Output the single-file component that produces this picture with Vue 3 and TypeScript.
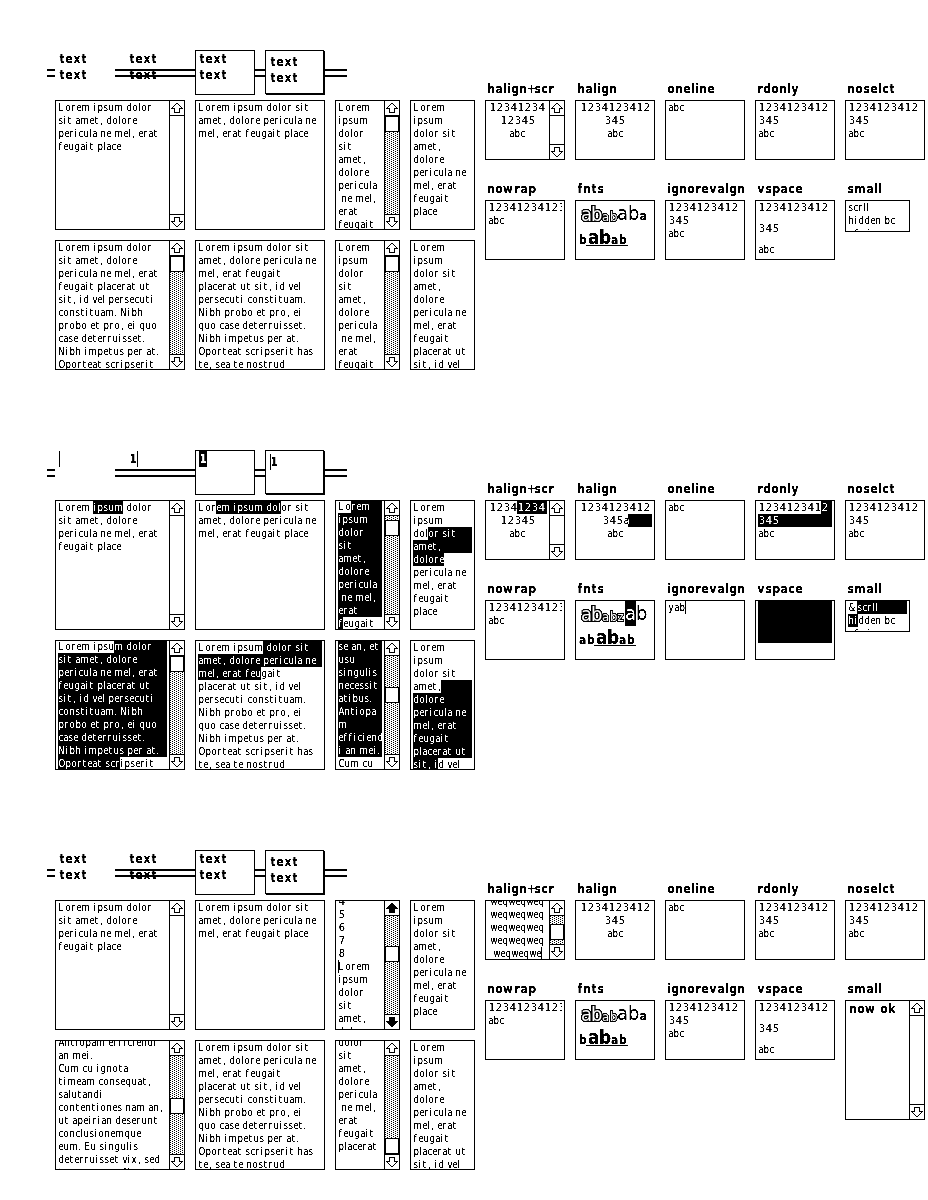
<script setup lang="ts">
import { defineComponent, h, type PropType } from 'vue'

type Face = 'plain' | 'bold'
interface Line { t: string; sel?: [number, number]; caret?: number }
interface Box {
  w: number; h: number; lines: Line[]; thumb?: number; bar?: boolean; solid?: boolean
  center?: boolean; shift?: number; pitch?: number; face?: Face; label?: string; fonts?: Run[]; block?: [number, number, number, number]
}
interface Run { t: string; x: number; y: number; size: number; bold?: boolean; outline?: boolean; shade?: boolean; adv: number; line?: [number, number] }
interface Field { kind: string; lines: Line[] }

const plainAdv: Record<string, number> = {
  a: 5, b: 6, c: 5, d: 6, e: 5, f: 5, g: 6, h: 6, i: 4, l: 3, m: 9, n: 6, o: 6, p: 6, q: 6, r: 5, s: 5, t: 5,
  u: 6, v: 5, w: 7, x: 6, y: 6, z: 6, L: 7, N: 7, O: 7, C: 6, E: 6, A: 6, ',': 4, '.': 3, ' ': 3, '&': 9,
}
const boldAdv: Record<string, number> = {
  a: 8, b: 8, c: 7, d: 8, e: 8, f: 6, g: 8, h: 8, i: 4, k: 8, l: 4, m: 12, n: 8, o: 8, p: 8, r: 6, s: 7, t: 6,
  u: 8, v: 8, w: 11, x: 8, y: 8, ' ': 4, '+': 7, '1': 8,
}
const stops = (t: string, face: Face): number[] => {
  const table = face === 'bold' ? boldAdv : plainAdv
  const out = [0]
  for (const c of t) out.push(out[out.length - 1] + (table[c] ?? 7))
  return out
}
// side bearing of each glyph inside its cell
const bearing = (c: string, face: Face): number => {
  if (face === 'bold') return c === 'w' || c === '+' ? 0 : 0.6
  if (/[0-9]/.test(c)) return 0.8
  return c === ',' ? 1.4 : c === 'L' || c === 'N' ? 0.3 : 0.6
}

const TextLine = defineComponent({
  props: {
    line: { type: Object as PropType<Line>, required: true },
    face: { type: String as PropType<Face>, default: 'plain' },
    width: { type: Number, required: true },
    pitch: { type: Number, default: 13 },
    center: Boolean,
  },
  setup(p) {
    return () => {
      const s = stops(p.line.t, p.face)
      const total = s[s.length - 1]
      const x0 = p.center ? Math.floor((p.width - total) / 2) : 0
      const k = p.face === 'bold' ? 0.94 : /^[0-9]/.test(p.line.t) ? 1 : 0.87
      const kids = []
      if (p.line.t) {
        kids.push(h('text', {
          class: 'glyphs ' + p.face,
          x: [...p.line.t].map((c, i) => ((s[i] + x0 + bearing(c, p.face)) / k).toFixed(2)).join(' '),
          y: p.face === 'bold' ? 12 : 10,
          transform: `scale(${k} 1)`,
          filter: 'url(#bitmap)',
        }, p.line.t))
      }
      if (p.line.sel) {
        const [a, b] = p.line.sel
        const left = a === 0 && !p.center ? 0 : x0 + s[a]
        const right = b < 0 ? p.width : x0 + s[b]
        kids.push(h('rect', { class: 'invert', x: left, y: 0, width: right - left, height: p.pitch }))
      }
      if (p.line.caret !== undefined) {
        kids.push(h('rect', { x: x0 + s[p.line.caret], y: 0, width: 1, height: p.pitch }))
      }
      return h('svg', { class: 'line', width: p.width, height: p.pitch, 'shape-rendering': 'crispEdges' }, kids)
    }
  },
})

const L = (...t: string[]): Line[] => t.map((x) => ({ t: x }))
const mark = (lines: Line[], marks: Record<number, [number, number]>): Line[] =>
  lines.map((l, i) => (marks[i] ? { ...l, sel: marks[i] } : l))

const shortA = L('Lorem ipsum dolor', 'sit amet, dolore', 'pericula ne mel, erat', 'feugait place')
const shortB = L('Lorem ipsum dolor sit', 'amet, dolore pericula ne', 'mel, erat feugait place')
const thinA = L('Lorem', 'ipsum', 'dolor', 'sit', 'amet,', 'dolore', 'pericula', ' ne mel,', 'erat', 'feugait')
const thinB = L('Lorem', 'ipsum', 'dolor sit', 'amet,', 'dolore', 'pericula ne', 'mel, erat', 'feugait', 'place')
const thinC = L('Lorem', 'ipsum', 'dolor sit', 'amet,', 'dolore', 'pericula ne', 'mel, erat', 'feugait', 'placerat ut', 'sit, id vel')
const longA = L('Lorem ipsum dolor', 'sit amet, dolore', 'pericula ne mel, erat', 'feugait placerat ut', 'sit, id vel persecuti',
  'constituam. Nibh', 'probo et pro, ei quo', 'case deterruisset.', 'Nibh impetus per at.', 'Oporteat scripserit')
const longB = L('Lorem ipsum dolor sit', 'amet, dolore pericula ne', 'mel, erat feugait', 'placerat ut sit, id vel', 'persecuti constituam.',
  'Nibh probo et pro, ei', 'quo case deterruisset.', 'Nibh impetus per at.', 'Oporteat scripserit has', 'te, sea te nostrud')
const digits = L('1234123412', '345', 'abc')

const A: [number, number] = [0, -1]
const wide = { w: 130, h: 130 }
const thin = { w: 65, h: 130 }
const cell = { w: 80, h: 60 }

const fontsBase: Run[] = [
  { t: 'ab', x: 3, y: 20, size: 20, outline: true, shade: true, adv: 10 },
  { t: 'ab', x: 24, y: 20, size: 13, outline: true, adv: 8 },
]
const fontsOne: Run[] = [
  ...fontsBase,
  { t: 'ab', x: 39, y: 19, size: 20, adv: 11 },
  { t: 'a', x: 61.5, y: 19, size: 12, bold: true, adv: 8 },
  { t: 'b', x: 1, y: 43, size: 12, bold: true, adv: 8 },
  { t: 'ab', x: 10, y: 43, size: 19, bold: true, adv: 11, line: [8, 50] },
  { t: 'ab', x: 33, y: 43, size: 12, bold: true, adv: 8 },
]
const fontsTwo: Run[] = [
  ...fontsBase,
  { t: 'z', x: 39.5, y: 20, size: 13, outline: true, adv: 8 },
  { t: 'ab', x: 47, y: 19, size: 20, adv: 11 },
  { t: 'ab', x: 1, y: 43, size: 12, bold: true, adv: 8 },
  { t: 'ab', x: 18, y: 43, size: 19, bold: true, adv: 11, line: [16, 58] },
  { t: 'ab', x: 41, y: 43, size: 12, bold: true, adv: 8 },
]

const grid = (over: Record<string, Partial<Box>>): Box[] => {
  const base: Box[] = [
    { ...cell, label: 'halign+scr', bar: true, center: true, lines: L('12341234', '12345', 'abc') },
    { ...cell, label: 'halign', center: true, lines: digits },
    { ...cell, label: 'oneline', lines: L('abc') },
    { ...cell, label: 'rdonly', lines: digits },
    { ...cell, label: 'noselct', lines: digits },
    { ...cell, label: 'nowrap', lines: L('12341234123', 'abc') },
    { ...cell, label: 'fnts', lines: [], fonts: fontsOne },
    { ...cell, label: 'ignorevalgn', lines: digits },
    { ...cell, label: 'vspace', lines: digits, pitch: 21 },
    { w: 65, h: 32, label: 'small', lines: L('scrll', 'hidden bc', 'of size') },
  ]
  return base.map((b) => ({ ...b, ...(over[b.label!] ?? {}) }))
}

const kinds = ['opaque', 'clear', 'opaque framed', 'opaque framed shadow']
const textFields: Field[] = kinds.map((kind) => ({ kind, lines: L('text', 'text') }))

const sections: { fields: Field[]; areas: Box[]; cells: Box[] }[] = [
  {
    fields: textFields,
    areas: [
      { ...wide, bar: true, lines: shortA },
      { ...wide, lines: shortB },
      { ...thin, bar: true, thumb: 0, lines: thinA },
      { ...thin, lines: thinB },
      { ...wide, bar: true, thumb: 0, lines: longA },
      { ...wide, lines: longB },
      { ...thin, bar: true, thumb: 0, lines: thinA },
      { ...thin, lines: thinC },
    ],
    cells: grid({}),
  },
  {
    fields: [
      { kind: kinds[0], lines: [{ t: '', caret: 0 }] },
      { kind: kinds[1], lines: [{ t: '1', caret: 1 }] },
      { kind: kinds[2], lines: [{ t: '1', sel: [0, 1] }] },
      { kind: kinds[3], lines: [{ t: '1', caret: 0 }] },
    ],
    areas: [
      { ...wide, bar: true, lines: mark(shortA, { 0: [6, 11] }) },
      { ...wide, lines: mark(shortB, { 0: [3, 15] }) },
      { ...thin, bar: true, thumb: 4, shift: -1, lines: mark(thinA, { 0: [2, -1], 1: A, 2: A, 3: A, 4: A, 5: A, 6: A, 7: A, 8: A, 9: [0, 1] }) },
      { ...thin, lines: mark(thinB, { 2: [3, -1], 3: A, 4: [0, 6] }) },
      { ...wide, bar: true, thumb: 0, shift: -1, lines: mark(longA, { 0: [10, -1], 1: A, 2: A, 3: A, 4: A, 5: A, 6: A, 7: A, 8: A, 9: [0, 12] }) },
      { ...wide, lines: mark(longB, { 0: [11, -1], 1: A, 2: [0, 13] }) },
      {
        ...thin, bar: true, thumb: 31, shift: -1,
        lines: mark(L('se an, et', 'usu', 'singulis', 'necessit', 'atibus.', 'Antiopa', 'm', 'efficiend', 'i an mei.', 'Cum cu'),
          { 0: A, 1: A, 2: A, 3: A, 4: A, 5: A, 6: A, 7: A, 8: A }),
      },
      { ...thin, lines: mark(thinC, { 3: [5, -1], 4: A, 5: A, 6: A, 7: A, 8: A, 9: [0, 6] }) },
    ],
    cells: grid({
      'halign+scr': { lines: mark(L('12341234', '12345', 'abc'), { 0: [4, -1] }) },
      halign: { lines: mark(L('1234123412', '345a', 'abc'), { 1: [4, -1] }) },
      rdonly: { lines: mark(digits, { 0: [9, -1], 1: A }) },
      fnts: { fonts: fontsTwo, block: [47, 0, 11, 25] },
      ignorevalgn: { lines: [{ t: 'yab', caret: 3 }] },
      vspace: { lines: mark(L('', ''), { 0: A, 1: A }) },
      small: { lines: mark(L('&scrll', 'hidden bc', 'of size'), { 0: [1, -1], 1: [0, 2] }) },
    }),
  },
  {
    fields: textFields,
    areas: [
      { ...wide, bar: true, lines: shortA },
      { ...wide, lines: shortB },
      {
        ...thin, bar: true, thumb: 30, solid: true, shift: -6,
        lines: [...L('4', '5', '6', '7', '8'), { t: 'Lorem', caret: 0 }, ...L('ipsum', 'dolor', 'sit', 'amet,', 'dolore')],
      },
      { ...thin, lines: thinB },
      {
        ...wide, bar: true, thumb: 42, shift: -5,
        lines: L('Antiopam efficiendi', 'an mei.', 'Cum cu ignota', 'timeam consequat,', 'salutandi', 'contentiones nam an,',
          'ut apeirian deserunt', 'conclusionemque', 'eum. Eu singulis', 'deterruisset vix, sed', 'te omnesque fierent'),
      },
      { ...wide, lines: longB },
      { ...thin, bar: true, thumb: 82, shift: -5, lines: L('dolor', 'sit', 'amet,', 'dolore', 'pericula', ' ne mel,', 'erat', 'feugait', 'placerat') },
      { ...thin, lines: thinC },
    ],
    cells: grid({
      'halign+scr': {
        thumb: 8, shift: -6,
        lines: [...L('weqweqweq', 'weqweqweq', 'weqweqweq', 'weqweqweq'), { t: 'weqweqwe', caret: 8 }],
      },
      small: { w: 80, h: 120, bar: true, face: 'bold', pitch: 16, lines: L('now ok') },
    }),
  },
]

const contentWidth = (b: Box) => (b.bar ? b.w - 21 : b.w - 6)
const runStops = (r: Run) => [...r.t].map((_, i) => r.x + i * r.adv).join(' ')

const outlineRows: [number, number, number][] = [
  [2, 6, 2], [3, 5, 1], [3, 8, 1], [4, 4, 1], [4, 9, 1], [5, 3, 1], [5, 10, 1], [6, 2, 1], [6, 11, 1],
  [7, 1, 4], [7, 9, 4], [8, 4, 1], [8, 9, 1], [9, 4, 1], [9, 9, 1], [10, 4, 1], [10, 9, 1], [11, 4, 6],
]
const solidRows: [number, number, number][] = [
  [2, 6, 2], [3, 5, 4], [4, 4, 6], [5, 3, 8], [6, 2, 10], [7, 1, 12], [8, 4, 6], [9, 4, 6], [10, 4, 6], [11, 4, 6],
]
const arrow = (solid?: boolean) =>
  (solid ? solidRows : outlineRows).map(([y, x, n]) => `M${x} ${y}h${n}v1h${-n}z`).join('')
</script>

<template>
  <main class="page">
    <svg class="defs" width="0" height="0" aria-hidden="true">
      <filter id="bitmap" x="-5%" y="-20%" width="110%" height="140%">
        <feComponentTransfer><feFuncA type="linear" slope="5" intercept="-1.6" /></feComponentTransfer>
      </filter>
    </svg>
    <section v-for="(s, si) in sections" :key="si" class="suite">
      <div class="left">
        <div class="fields">
          <div v-for="(f, i) in s.fields" :key="i" class="field" :class="f.kind">
            <TextLine v-for="(l, j) in f.lines" :key="j" :line="l" face="bold" :width="50" :pitch="16" />
          </div>
        </div>
        <div class="areas">
          <div v-for="(b, i) in s.areas" :key="i" class="box" :style="{ width: b.w + 'px', height: b.h + 'px' }">
            <div class="content" :style="{ width: contentWidth(b) + 'px' }">
              <div class="lines" :style="{ marginTop: (b.shift ?? 0) + 'px' }">
                <TextLine v-for="(l, j) in b.lines" :key="j" :line="l" :width="contentWidth(b)" />
              </div>
            </div>
            <div v-if="b.bar" class="bar">
              <svg class="arrow" width="14" height="14"><path :d="arrow(b.solid)" /></svg>
              <div class="track" :class="{ active: b.thumb !== undefined }">
                <div v-if="b.thumb !== undefined" class="thumb" :style="{ marginTop: b.thumb + 'px' }"></div>
              </div>
              <svg class="arrow down" width="14" height="14"><path :d="arrow(b.solid)" /></svg>
            </div>
          </div>
        </div>
      </div>
      <div class="cells">
        <div v-for="b in s.cells" :key="b.label" class="cell">
          <div class="label"><TextLine :line="{ t: b.label! }" face="bold" :width="82" :pitch="16" /></div>
          <div class="box" :style="{ width: b.w + 'px', height: b.h + 'px' }">
            <div class="content" :style="{ width: contentWidth(b) + 'px' }">
              <svg v-if="b.fonts" class="line" width="74" height="58" shape-rendering="crispEdges">
                <template v-for="(r, j) in b.fonts" :key="j">
                  <text
                    class="run" :class="{ strong: r.bold, outline: r.outline, shade: r.shade }"
                    :x="runStops(r)" :y="r.y" :font-size="r.size" filter="url(#bitmap)"
                  >{{ r.t }}</text>
                  <rect v-if="r.line" :x="r.line[0]" y="44" :width="r.line[1] - r.line[0]" height="1" />
                </template>
                <rect v-if="b.block" class="invert" :x="b.block[0]" :y="b.block[1]" :width="b.block[2]" :height="b.block[3]" />
              </svg>
              <div v-else class="lines" :class="{ strong: b.face === 'bold' }" :style="{ marginTop: (b.shift ?? 0) + 'px' }">
                <TextLine
                  v-for="(l, j) in b.lines" :key="j" :line="l" :face="b.face ?? 'plain'" :width="contentWidth(b)"
                  :pitch="b.pitch ?? 13" :center="b.center"
                />
              </div>
            </div>
            <div v-if="b.bar" class="bar">
              <svg class="arrow" width="14" height="14"><path :d="arrow()" /></svg>
              <div class="track" :class="{ active: b.thumb !== undefined }">
                <div v-if="b.thumb !== undefined" class="thumb" :style="{ marginTop: b.thumb + 'px' }"></div>
              </div>
              <svg class="arrow down" width="14" height="14"><path :d="arrow()" /></svg>
            </div>
          </div>
        </div>
      </div>
    </section>
  </main>
</template>

<style scoped>
.page {
  width: 928px;
  height: 1200px;
  overflow: hidden;
  background: #fff;
  color: #000;
}
.defs {
  display: block;
}
.suite {
  height: 350px;
  padding: 50px 0 0 47px;
  display: flex;
  align-items: flex-start;
}
.left {
  width: 438px;
}
.fields {
  width: 292px;
  height: 45px;
  padding-left: 8px;
  display: flex;
  gap: 10px;
  background:
    linear-gradient(#000, #000) 0 19px / 300px 2px no-repeat,
    linear-gradient(#000, #000) 0 25px / 300px 2px no-repeat;
}
.field {
  box-sizing: border-box;
  flex: none;
  width: 60px;
  height: 45px;
  padding: 1px 0 0 4px;
}
.opaque {
  background: #fff;
}
.framed {
  border: 1px solid #000;
  padding: 0 0 0 3px;
}
.shadow {
  width: 59px;
  height: 44px;
  padding: 3px 0 0 4px;
  box-shadow: 1px 1px 0 #000;
}
.areas {
  margin: 5px 0 0 8px;
  display: grid;
  grid-template-columns: 130px 130px 65px 65px;
  gap: 10px;
}
.cells {
  margin-top: 31px;
  display: grid;
  grid-template-columns: repeat(5, 80px);
  grid-template-rows: 90px auto;
  gap: 10px;
}
.label {
  height: 19px;
  padding-left: 2px;
}
.box {
  box-sizing: border-box;
  border: 1px solid #000;
  display: flex;
  justify-content: space-between;
  overflow: hidden;
}
.content {
  flex: none;
  margin-left: 2px;
  height: 100%;
  overflow: hidden;
}
.lines.strong {
  padding-left: 1px;
}
.bar {
  width: 14px;
  flex: none;
  border-left: 1px solid #000;
  display: flex;
  flex-direction: column;
}
.arrow {
  display: block;
  flex: none;
  shape-rendering: crispEdges;
}
.down {
  transform: scaleY(-1);
}
.track {
  flex: 1;
  border-top: 1px solid #000;
  border-bottom: 1px solid #000;
}
.active {
  background:
    linear-gradient(#000, #000) 0 0 / 0 0 no-repeat,
    conic-gradient(from 0deg at 1px 1px, #fff 0 75%, #000 0) 0 0 / 4px 2px,
    conic-gradient(from 0deg at 1px 1px, #fff 0 75%, #000 0) 2px 1px / 4px 2px;
  background-blend-mode: normal, multiply, multiply;
}
.thumb {
  box-sizing: border-box;
  width: 14px;
  height: 16px;
  border: 1px solid #000;
  background: #fff;
}
:deep(.line),
.line {
  display: block;
  overflow: visible;
}
:deep(.glyphs) {
  white-space: pre;
  fill: #000;
}
:deep(.plain) {
  font: 11px 'DejaVu Sans Condensed', 'DejaVu Sans', sans-serif;
}
:deep(.bold) {
  font: bold 12.5px 'DejaVu Sans Condensed', 'DejaVu Sans', sans-serif;
}
:deep(.invert),
.invert {
  fill: #fff;
  mix-blend-mode: difference;
}
.run {
  font-family: 'DejaVu Sans Condensed', 'DejaVu Sans', sans-serif;
}
.run.strong {
  font-weight: bold;
}
.outline {
  fill: #fff;
  stroke: #000;
  stroke-width: 1.9px;
  paint-order: stroke;
}
.shade {
  stroke-width: 2.4px;
}
</style>

<style>
body {
  margin: 0;
  background: #fff;
}
</style>
